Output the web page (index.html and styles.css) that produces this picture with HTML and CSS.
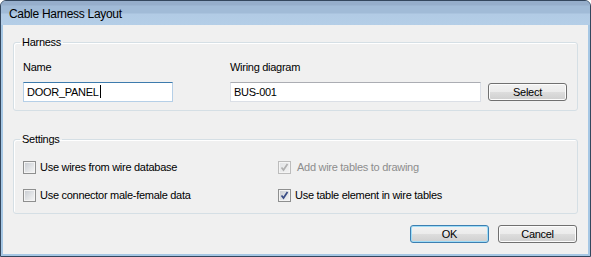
FILE: index.html
```html
<html>

<head>
    <title>Cable Harness Layout</title>
    <link rel="stylesheet" href="styles.css">
</head>

<body>
    <div class="window">
        <div class="titlebar">Cable Harness Layout</div>
        <div class="client">
            <fieldset class="group harness">
                <legend>Harness</legend>
                <div class="field-row">
                    <div class="field name-field">
                        <label>Name</label>
                        <div class="textbox focused">DOOR_PANEL<span class="caret"></span></div>
                    </div>
                    <div class="field diagram-field">
                        <label>Wiring diagram</label>
                        <div class="textbox">BUS-001</div>
                    </div>
                    <button class="btn select-btn">Select</button>
                </div>
            </fieldset>
            <fieldset class="group settings">
                <legend>Settings</legend>
                <div class="options">
                    <label class="check"><span class="box"></span>Use wires from wire database</label>
                    <label class="check disabled"><span class="box"><svg width="11" height="11" viewBox="0 0 11 11"><path d="M2.5 5.5 L4.5 8 L8.5 2" /></svg></span>Add wire tables to drawing</label>
                    <label class="check"><span class="box"></span>Use connector male-female data</label>
                    <label class="check"><span class="box"><svg width="11" height="11" viewBox="0 0 11 11"><path d="M2.5 5.5 L4.5 8 L8.5 2" /></svg></span>Use table element in wire tables</label>
                </div>
            </fieldset>
            <div class="actions">
                <button class="btn default">OK</button>
                <button class="btn">Cancel</button>
            </div>
        </div>
    </div>
</body>

</html>
```

FILE: styles.css
```css
body {
    margin: 0;
    font-family: 'Liberation Sans', Arial, sans-serif;
    font-size: 11px;
    letter-spacing: -0.28px;
    color: #000;
    background: #fff;
}

.window {
    box-sizing: border-box;
    width: 591px;
    height: 257px;
    display: flex;
    flex-direction: column;
    border: 1px solid #34475e;
    border-radius: 6px 6px 0 0;
    background-color: #a6c7e4;
    padding: 0 2px 2px 2px;
}

.titlebar {
    height: 24px;
    line-height: 26px;
    margin: 0 -2px;
    padding-left: 8px;
    font-size: 12px;
    letter-spacing: -0.3px;
    color: #000;
    background: linear-gradient(to bottom, #96aecb 0px, #96aecb 4px, #a1bbd7 5px, #a1bbd7 12px, #b2cbe5 13px, #b4cee7 24px);
    border-radius: 5px 5px 0 0;
}

.client {
    flex: 1;
    background-color: #f0f0f0;
    padding: 11px 10px 0 10px;
}

/* group boxes */

.group {
    margin: 0;
    padding: 12px 9px 8px 9px;
    border: 1px solid #d5dfe5;
    border-radius: 3px;
    box-shadow: inset 1px 1px 0 #fff;
}

.group legend {
    margin-left: -3px;
    padding: 0 2px;
    line-height: 13px;
}

.settings {
    margin-top: 22px;
    padding: 15px 9px 11px 9px;
}

.field-row {
    display: flex;
    align-items: flex-end;
}

.field label {
    display: block;
    line-height: 13px;
    margin-bottom: 8px;
}

.name-field {
    width: 150px;
    margin-right: 57px;
}

.diagram-field {
    width: 251px;
    margin-right: 7px;
}

.textbox {
    box-sizing: border-box;
    height: 20px;
    line-height: 18px;
    padding-left: 3px;
    background-color: #fff;
    border: 1px solid #dbdfe6;
    border-top-color: #abadb3;
    white-space: nowrap;
}

.textbox.focused {
    border-color: #b5cfe7;
    border-top-color: #3d7bad;
}

.caret {
    display: inline-block;
    width: 1px;
    height: 13px;
    background-color: #000;
    vertical-align: -2px;
    margin-left: 1px;
}

/* buttons */

.btn {
    box-sizing: border-box;
    width: 79px;
    height: 18px;
    padding: 0;
    font-family: inherit;
    font-size: 11px;
    letter-spacing: inherit;
    color: #000;
    border: 1px solid #707070;
    border-radius: 3px;
    background: linear-gradient(to bottom, #f2f2f2 0%, #ebebeb 50%, #dddddd 51%, #cfcfcf 100%);
    box-shadow: inset 0 0 0 1px #fcfcfc;
}

.select-btn {
    margin-bottom: 1px;
}

.btn.default {
    border-color: #3c7fb1;
    box-shadow: inset 0 0 0 1px #9fdcf7;
}

.actions {
    display: flex;
    justify-content: flex-end;
    gap: 9px;
    margin-top: 11px;
    margin-right: 1px;
}

/* check boxes */

.options {
    display: grid;
    grid-template-columns: 255px auto;
    row-gap: 15px;
}

.check {
    display: flex;
    align-items: center;
    height: 13px;
    line-height: 13px;
}

.box {
    box-sizing: border-box;
    width: 13px;
    height: 13px;
    margin-right: 4px;
    border: 1px solid #8e8f8f;
    background: linear-gradient(135deg, #c6cad0 0%, #e4e6e8 60%, #f6f6f6 100%);
    box-shadow: inset 0 0 0 1px #f4f4f4;
    display: flex;
    align-items: center;
    justify-content: center;
}

.box svg path {
    fill: none;
    stroke: #3a4d86;
    stroke-width: 1.7;
}

.disabled {
    color: #8d8d8d;
}

.disabled .box {
    border-color: #bcbcbc;
    background: linear-gradient(135deg, #e2e4e6 0%, #f2f2f2 100%);
}

.disabled .box svg path {
    stroke: #b0b0b0;
}

.check.disabled .box {
    margin-right: 6px;
}
```
